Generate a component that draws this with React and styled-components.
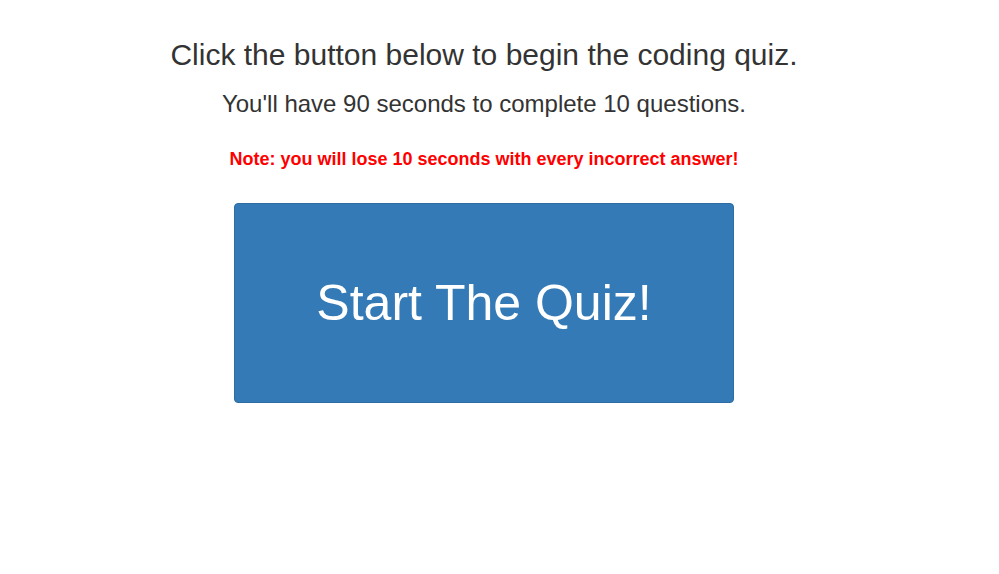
import React from 'react';
import styled, { createGlobalStyle } from 'styled-components';

const GlobalStyle = createGlobalStyle`
  * {
    box-sizing: border-box;
  }

  body {
    margin: 0;
    background-color: #fff;
    color: #333;
    font-family: "Liberation Sans", Arial, Helvetica, sans-serif;
  }
`;

const Main = styled.main`
  width: 968px;
  display: flex;
  flex-direction: column;
  align-items: center;
  text-align: center;
  padding-top: 38px;
`;

const Title = styled.h2`
  margin: 0;
  font-size: 30px;
  font-weight: 400;
  line-height: 1.1;
`;

const Subtitle = styled.h3`
  margin: 20px 0 0;
  font-size: 24px;
  font-weight: 400;
  line-height: 1.1;
`;

const Warning = styled.p`
  margin: 30px 0 0;
  font-size: 18px;
  font-weight: 700;
  line-height: 1.42857;
  color: #ff0000;
`;

const StartButton = styled.button`
  margin-top: 30px;
  width: 500px;
  height: 200px;
  display: flex;
  align-items: center;
  justify-content: center;
  background-color: #337ab7;
  border: 1px solid #2e6da4;
  border-radius: 4px;
  color: #fff;
  font-family: inherit;
  font-size: 50px;
  line-height: 1;
  cursor: pointer;

  &:hover {
    background-color: #286090;
  }
`;

function App() {
  return (
    <>
      <GlobalStyle />
      <Main>
        <Title>Click the button below to begin the coding quiz.</Title>
        <Subtitle>You'll have 90 seconds to complete 10 questions.</Subtitle>
        <Warning>Note: you will lose 10 seconds with every incorrect answer!</Warning>
        <StartButton type="button">Start The Quiz!</StartButton>
      </Main>
    </>
  );
}

export default App;
